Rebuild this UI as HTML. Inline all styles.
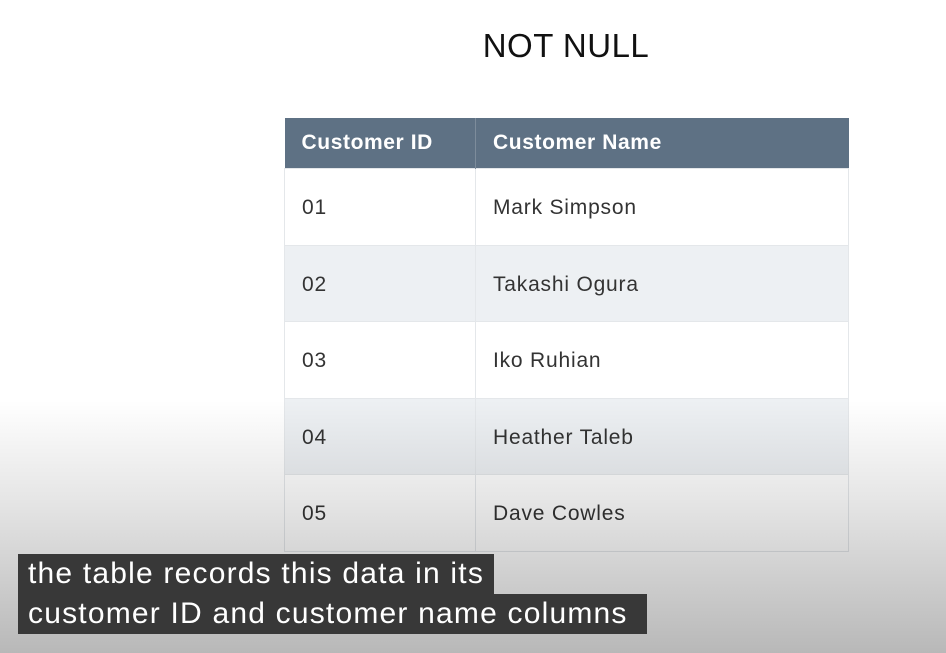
<!DOCTYPE html>
<html><head><style>
html,body{margin:0;padding:0;}
body{width:946px;height:653px;position:relative;overflow:hidden;background:#fff;font-family:"Liberation Sans",sans-serif;}
.title{position:absolute;left:0;width:1132px;top:27px;text-align:center;font-size:33px;color:#111;letter-spacing:0.5px;}
table{position:absolute;left:284px;top:118px;border-collapse:collapse;width:565px;}
th{background:#5e7184;color:#fff;text-align:left;font-weight:bold;font-size:21px;letter-spacing:0.6px;height:50px;padding:0 0 0 17px;}
td{height:72.5px;padding:3px 0 0 17px;font-size:21px;letter-spacing:0.8px;color:#333;border:1px solid #e4e7ea;}
tr.alt td{background:#edf0f3;}
th.c1,td.c1{width:173px;}
th.c1{border-right:1px solid #7d8c9b;}
.ov{position:absolute;left:0;top:400px;width:946px;height:253px;background:linear-gradient(rgba(0,0,0,0),rgba(0,0,0,0.1) 40%,rgba(0,0,0,0.28));}
.cap{position:absolute;left:18px;background:#383838;color:#fff;font-size:30px;height:40px;line-height:40px;padding:0 10px;letter-spacing:1.2px;white-space:nowrap;}
</style></head><body>
<div class="title">NOT NULL</div>
<table>
<tr><th class="c1">Customer ID</th><th>Customer Name</th></tr>
<tr><td class="c1">01</td><td>Mark Simpson</td></tr>
<tr class="alt"><td class="c1">02</td><td>Takashi Ogura</td></tr>
<tr><td class="c1">03</td><td>Iko Ruhian</td></tr>
<tr class="alt"><td class="c1">04</td><td>Heather Taleb</td></tr>
<tr><td class="c1">05</td><td>Dave Cowles</td></tr>
</table>
<div class="ov"></div>
<div class="cap" style="top:554px;width:456px;overflow:hidden;">the table records this data in its</div>
<div class="cap" style="top:594px;width:609px;overflow:hidden;">customer ID and customer name columns</div>
</body></html>
